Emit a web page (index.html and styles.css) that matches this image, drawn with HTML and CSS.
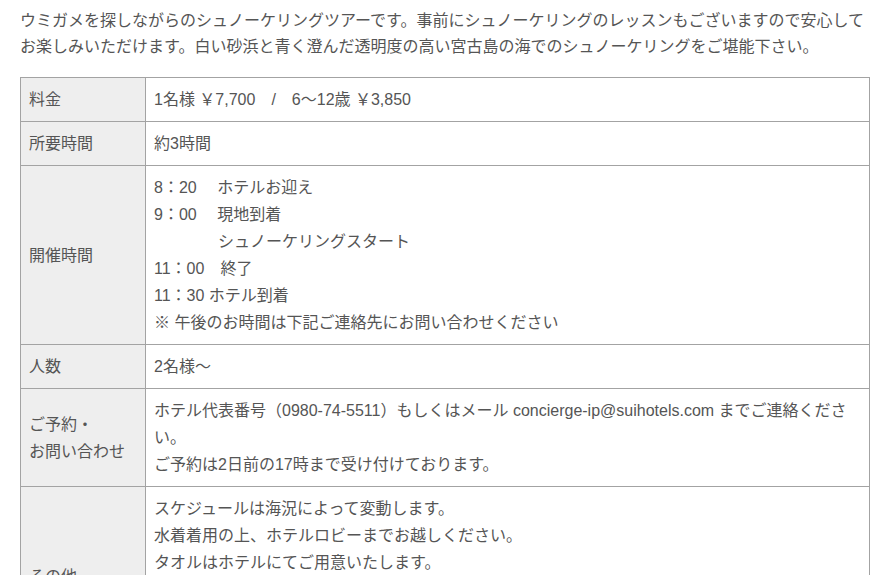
FILE: index.html
```html
<!DOCTYPE html>
<html lang="ja">
<head>
<meta charset="utf-8">
<link rel="stylesheet" href="styles.css">
</head>
<body>
<div class="page">
  <p class="intro">ウミガメを探しながらのシュノーケリングツアーです。事前にシュノーケリングのレッスンもございますので安心してお楽しみいただけます。白い砂浜と青く澄んだ透明度の高い宮古島の海でのシュノーケリングをご堪能下さい。</p>
  <table class="info">
    <tr>
      <th>料金</th>
      <td>1名様 ￥7,700　/　6～12歳 ￥3,850</td>
    </tr>
    <tr>
      <th>所要時間</th>
      <td>約3時間</td>
    </tr>
    <tr>
      <th>開催時間</th>
      <td>8：20　 ホテルお迎え<br>9：00　 現地到着<br>　　　　シュノーケリングスタート<br>11：00　終了<br>11：30 ホテル到着<br>※ 午後のお時間は下記ご連絡先にお問い合わせください</td>
    </tr>
    <tr>
      <th>人数</th>
      <td>2名様～</td>
    </tr>
    <tr>
      <th>ご予約・<br>お問い合わせ</th>
      <td>ホテル代表番号（0980-74-5511）もしくはメール concierge-ip@suihotels.com までご連絡ください。<br>ご予約は2日前の17時まで受け付けております。</td>
    </tr>
    <tr>
      <th>その他</th>
      <td>スケジュールは海況によって変動します。<br>水着着用の上、ホテルロビーまでお越しください。<br>タオルはホテルにてご用意いたします。<br>マスク・シュノーケル・フィンは貸し出しいたします。<br>日焼け止めをご持参ください。<br>天候により中止となる場合がございます。</td>
    </tr>
  </table>
</div>
</body>
</html>
```
FILE: styles.css
```css
html, body {
  margin: 0;
  padding: 0;
  background: #fff;
}
body {
  font-family: "Liberation Sans", "Noto Sans CJK JP", sans-serif;
  font-size: 16px;
  line-height: 27px;
  color: #555;
}
.page {
  width: 850px;
  padding: 8px 20px 20px;
}
.intro {
  margin: 0 0 17px;
  line-height: 26px;
}
.info {
  width: 100%;
  border-collapse: collapse;
}
.info th,
.info td {
  border: 1px solid #a3a3a3;
  padding: 8px 8px;
  text-align: left;
  vertical-align: middle;
  font-weight: normal;
}
.info th {
  width: 108px;
  background: #eeeeee;
}
```
